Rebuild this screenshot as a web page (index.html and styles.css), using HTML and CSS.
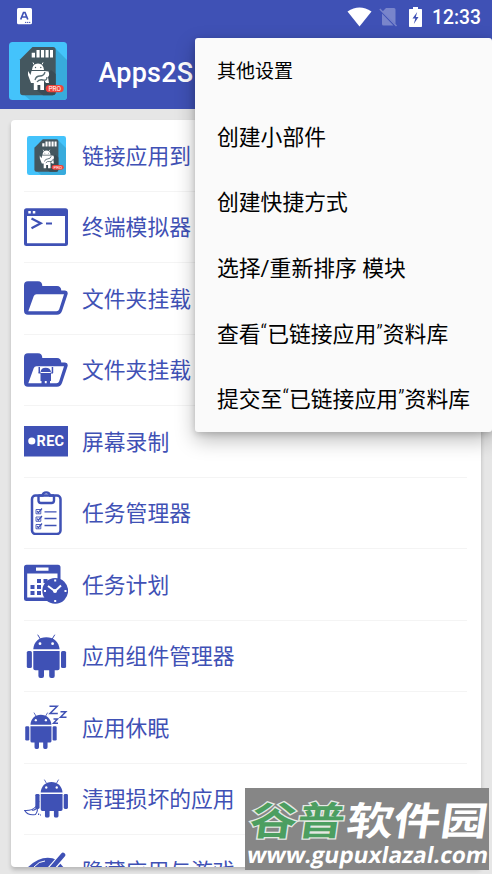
FILE: index.html
```html
<!DOCTYPE html>
<html lang="zh-CN">
<head>
<meta charset="utf-8">
<title>Apps2SD</title>
<link rel="stylesheet" href="styles.css">
</head>
<body>
<svg class="defs" width="0" height="0" aria-hidden="true">
  <symbol id="robot" viewBox="0 0 44 44">
    <path d="M13.7.7 16.3 5M30.8.7 28.2 5" fill="none" stroke="currentColor" stroke-width="1"/>
    <path d="M9.3 15.3C9.600 8 15 3.300 22.300 3.300S35 8 35.600 15.300Z"/>
    <path d="M9.300 17H35.600V34.500Q35.600 36.300 33.600 36.300H30.700V42Q30.700 44 28.800 44H27.200Q25.200 44 25.200 42V36.300H20V42Q20 44 18 44H16.400Q14.400 44 14.400 42V36.300H11.300Q9.300 36.300 9.300 34.500Z"/>
    <rect x="2.800" y="17" width="5.100" height="17" rx="1.600"/>
    <rect x="37" y="17" width="5.100" height="17" rx="1.600"/>
    <circle cx="16" cy="9.700" r="1.400" fill="#fff"/><circle cx="28.600" cy="9.700" r="1.400" fill="#fff"/>
  </symbol>
  <symbol id="folder" viewBox="0 0 44 44">
    <path fill-rule="evenodd" d="M4 5.200H14Q18.300 5.200 18.300 10H33Q37 10 37.300 14.500H41Q44.500 15 43.500 18.500L38 35Q36.800 38.700 33 38.700H4Q0 38.700 0 34.700V9.200Q0 5.200 4 5.200ZM12.500 18.200Q10.500 18.200 9.700 20.200L4.300 35.200H32.500Q34.500 35.200 35.200 33.200L40 18.200Z"/>
  </symbol>
  <symbol id="app" viewBox="0 0 58 58">
    <rect width="58" height="58" rx="3.500" fill="#44c3fb"/>
    <path d="M46 6 58 18V54Q58 58 54 58H21L14 52Z" fill="#38abdc"/>
    <path d="M23.500 5H44Q46.700 5 46.700 8V50Q46.700 53.300 43.500 53.300H14Q11 53.300 11 50V17.500Z" fill="#44575f"/>
    <path d="M42 28 46.700 32V50Q46.700 53.300 43.500 53.300H34L25 46Z" fill="#3b4c54"/>
    <path d="M22.700 10.800H26V15.500H22.700ZM27.500 8H30.600V15.500H27.500ZM32 8H35.100V15.500H32ZM36.500 8H39.600V15.500H36.500ZM41 8H44V15.500H41Z" fill="#fff"/>
    <path d="M23 28Q23.500 21.500 29 21.500T35 28ZM22.500 29H35.500L39.500 29.500Q41 33 39 35L40 41H37L35 38V48H31.300V43H28.500V48H24.800V41H22L19 33V29L21.500 33Z" fill="#fff"/>
    <path d="M25 22.500 24 20.500M33 22.500 34 20.500" stroke="#fff"/>
    <path d="M26 38Q27 34 31 34T36 30M28 40Q30 37 34 38T38 35" fill="none" stroke="#566a72" stroke-width="1.300"/>
    <circle cx="26.500" cy="25.500" r=".7" fill="#44575f"/><circle cx="31.800" cy="25.500" r=".7" fill="#44575f"/>
    <rect x="36.700" y="43" width="18" height="7.200" rx="3.600" fill="#f0443a"/>
    <text x="45.700" y="48.900" text-anchor="middle" class="pro">PRO</text>
  </symbol>
</svg>

<div class="screen">
  <header class="top">
    <div class="status">
      <svg class="notif" width="15" height="17" viewBox="0 0 15 17"><rect width="15" height="16.300" rx="1.500" fill="#fff"/><path d="M3.700 11.500 6.500 4.500H8L10.800 11.500M5 9H9.500" fill="none" stroke="#3f51b5" stroke-width="1.700"/><path d="M8 14.400H14" stroke="#3f51b5" stroke-dasharray="1.300 .7"/></svg>
      <svg class="wifi" width="25" height="20" viewBox="0 0 25 20"><path d="M.5 4.500Q12.500-3.500 24.500 4.500L12.500 19.500Z" fill="#fff"/></svg>
      <svg class="sim" width="19" height="20" viewBox="0 0 19 20"><path d="M7 1H15Q16.500 1 16.500 2.500V17L3.500 4.500ZM3 6.500 14.500 18.500H4.500Q3 18.500 3 17Z" fill="#7985cb"/><path d="M.8 2 17.500 19" stroke="#7985cb" stroke-width="1.400"/></svg>
      <svg class="battery" width="13" height="20" viewBox="0 0 13 20"><path d="M4 0H9V2H12.300Q13 2 13 2.800V19.200Q13 20 12.300 20H.7Q0 20 0 19.200V2.800Q0 2 .7 2H4Z" fill="#fff"/><path d="M8.200 5 3.500 11.500H6.300L4.800 17 9.500 10H6.800Z" fill="#3f51b5"/></svg>
      <span class="clock">12:33</span>
    </div>
    <div class="bar">
      <svg class="logo" width="58" height="58"><use href="#app"/></svg>
      <h1 class="title">Apps2S</h1>
    </div>
  </header>

  <main class="card">
    <div class="row"><div class="icon"><svg width="39" height="39"><use href="#app"/></svg></div><span>链接应用到</span></div>
    <div class="row"><div class="icon"><svg width="44" height="44" viewBox="0 0 44 44"><path fill-rule="evenodd" d="M2.500 3.300H41.500Q44 3.300 44 5.800V38.500Q44 41 41.500 41H2.500Q0 41 0 38.500V5.800Q0 3.300 2.500 3.300ZM3 11V38.200H41V11Z"/><path d="M4.300 6H6.800V8.500H4.300ZM8.800 6H11.300V8.500H8.800Z" fill="#fff"/><path d="M7.500 13.500 16.800 18.300 7.500 23.200M22 18.500H28" fill="none" stroke="currentColor" stroke-width="2.200"/></svg></div><span>终端模拟器</span></div>
    <div class="row"><div class="icon"><svg width="44" height="44"><use href="#folder"/></svg></div><span>文件夹挂载</span></div>
    <div class="row"><div class="icon"><svg width="44" height="44" viewBox="0 0 44 44"><use href="#folder"/><path d="M16.500 24Q17 19.700 21.700 19.700T27 24ZM16.500 25H27V33H26V36H22.700V33H20.800V36H17.500V33H16.500ZM14.500 19H16V25H14.500ZM27.700 19H29.200V25H27.700Z"/><path d="M14.500 25H17M26.500 25H29" stroke="currentColor"/></svg></div><span>文件夹挂载</span></div>
    <div class="row"><div class="icon"><svg width="44" height="44" viewBox="0 0 44 44"><rect y="7" width="44" height="30.500"/><circle cx="7.800" cy="22" r="3.600" fill="#fff"/><text x="12.600" y="26.900" textLength="27.500" class="rec">REC</text></svg></div><span>屏幕录制</span></div>
    <div class="row"><div class="icon"><svg width="44" height="44" viewBox="0 0 44 44" fill="none" stroke="currentColor"><rect x="8" y="4.500" width="28.500" height="38.500" rx="3.500" stroke-width="2.500"/><path d="M14.500 4V9.500Q14.500 12 17 12H27.500Q30 12 30 9.500V4" stroke-width="2.400"/><path d="M14.500 4.500H18.500Q19 1.300 22.200 1.300T26 4.500H30" stroke-width="2.300"/><path d="M20.500 20.800H32.500M20.500 27.500H32.500M20.500 34.500H32.500" stroke-width="1.300"/><path d="M12 18.500H16.800V22.800H12ZM12 26H16.800V30.300H12ZM12 33.500H16.800V37.800H12Z" stroke-width=".9"/><path d="M13 20 14.300 21.700 18 17.500M13 27.500 14.300 29.200 18 25M13 35 14.300 36.700 18 32.500" stroke-width="1.200"/></svg></div><span>任务管理器</span></div>
    <div class="row"><div class="icon"><svg width="44" height="44" viewBox="0 0 44 44"><path fill-rule="evenodd" d="M2.500 2.800H34Q36.500 2.800 36.500 5.300V39H2.500Q0 39 0 36.500V5.300Q0 2.800 2.500 2.800ZM3.200 11.500V35.500H33.500V11.500ZM12 5.500V8.700H24.500V5.500Z"/><path d="M13 17H17V21H13ZM19.500 17H23.500V21H19.500ZM6.500 23H10.500V27H6.500ZM13 23H17V27H13ZM6.500 29H10.500V33H6.500ZM13 29H17V33H13Z"/><circle cx="31.200" cy="28.800" r="12.900"/><path d="M24 24 31 29.300 37 23.500" fill="none" stroke="#fff" stroke-width="2"/><circle cx="31" cy="29" r="2" fill="#fff"/><path d="M30.200 17.500H32.200V19.500H30.200ZM30.200 38H32.200V40H30.200ZM20 28H22V30H20ZM40.500 28H42.500V30H40.500Z" fill="#fff"/></svg></div><span>任务计划</span></div>
    <div class="row"><div class="icon"><svg width="44" height="44"><use href="#robot"/></svg></div><span>应用组件管理器</span></div>
    <div class="row"><div class="icon"><svg width="44" height="44" viewBox="0 0 44 44"><g transform="translate(-1 7) scale(.8 .84)"><use href="#robot" width="44" height="44"/></g><path d="M25.500 1.200H33.200L26 8.500H33.800M36.500 6.800H41.800L36.500 12.200H42.500M29.500 14H33.500L29.500 18.300H34" fill="none" stroke="currentColor" stroke-width="1.500"/></svg></div><span>应用休眠</span></div>
    <div class="row"><div class="icon"><svg width="44" height="44" viewBox="0 0 44 44"><g transform="translate(9 2) scale(.83 .88)"><use href="#robot" width="44" height="44"/></g><path d="M15 24 12.500 30M.7 33.500Q8 34 12 29.500Q15 33 11.500 37.500Q4 39 .7 33.500ZM8 33Q10 34 13 31" fill="none" stroke="currentColor" stroke-width="1.100"/><path d="M14 36.500H15.200V38H14ZM16 37.500H17V38.500H16Z"/></svg></div><span>清理损坏的应用</span></div>
    <div class="row"><div class="icon"><svg width="44" height="44" viewBox="0 0 44 44"><path d="M2 21Q18 5 33 12L42 22 22 34Z"/><path d="M19 30 42 4" stroke="#fff" stroke-width="7"/><path d="M14 36 39 7" stroke="currentColor" stroke-width="4.600" stroke-linecap="round"/><path d="M10 19Q15 13 21 13" fill="none" stroke="#fff"/></svg></div><span>隐藏应用与游戏</span></div>
  </main>

  <nav class="menu">
    <div class="item head">其他设置</div>
    <div class="item">创建小部件</div>
    <div class="item">创建快捷方式</div>
    <div class="item">选择/重新排序 模块</div>
    <div class="item">查看<span class="quote">“</span>已链接应用<span class="quote">”</span>资料库</div>
    <div class="item">提交至<span class="quote">“</span>已链接应用<span class="quote">”</span>资料库</div>
  </nav>

  <svg class="mark" width="244" height="82" viewBox="0 0 244 82">
    <rect width="244" height="82" fill="#868686"/>
    <text transform="translate(3 46.500) skewX(-8)" textLength="95" lengthAdjust="spacingAndGlyphs" class="brand green">谷普</text>
    <text transform="translate(100 46.500) skewX(-8)" textLength="141" lengthAdjust="spacingAndGlyphs" class="brand">软件园</text>
    <text transform="translate(1 74.500) skewX(-10)" textLength="241" lengthAdjust="spacingAndGlyphs" class="url">www.gupuxlazal.com</text>
  </svg>
</div>
</body>
</html>
```

FILE: styles.css
```css
* { box-sizing: border-box; }
body {
  margin: 0;
  background: #e6e6e6;
  font-family: Roboto, "Noto Sans CJK SC", sans-serif;
}
.defs { position: absolute; }
.screen {
  position: relative;
  width: 492px;
  height: 874px;
  overflow: hidden;
}
.top {
  height: 109px;
  background: #3f51b5;
  color: #fff;
}
.status {
  display: flex;
  align-items: center;
  height: 33px;
  padding: 0 11px 0 17px;
}
.wifi { margin-left: auto; }
.sim { margin-left: 7px; }
.battery { margin-left: 11px; }
.clock {
  margin: 2px 0 0 10px;
  font-size: 19.3px;
  font-weight: 500;
  line-height: 33px;
}
.bar {
  display: flex;
  align-items: center;
  height: 76px;
  padding-left: 9px;
}
.title {
  margin: 3px 0 0 31.500px;
  font-size: 27px;
  font-weight: 500;
  line-height: 32px;
  letter-spacing: .2px;
}
.card {
  width: 470px;
  height: 747px;
  margin: 11px 0 0 11px;
  overflow: hidden;
  background: #fff;
  border-radius: 4px;
  box-shadow: 0 3px 4px rgba(0, 0, 0, .2);
}
.row {
  display: flex;
  align-items: center;
  height: 71.500px;
  margin: 0 14px 0 13px;
  border-bottom: 1px solid #f4f4f4;
  color: #3f51b5;
  font-size: 21.8px;
  font-weight: 400;
  white-space: nowrap;
}
.row span { padding-bottom: 2px; }
.icon {
  display: flex;
  flex: none;
  justify-content: center;
  width: 44px;
  margin-right: 14px;
}
.icon svg { fill: currentColor; }
.icon svg[fill="none"] { fill: none; }
.pro {
  fill: #fff;
  font: 6.500px Roboto, sans-serif;
}
.rec {
  fill: #fff;
  font: 700 14.500px Roboto, sans-serif;
}
.menu {
  position: absolute;
  top: 38px;
  left: 195px;
  width: 297px;
  height: 394px;
  background: #fafafa;
  border-radius: 3px;
  box-shadow: 0 8px 20px rgba(0, 0, 0, .27), 0 2px 6px rgba(0, 0, 0, .16);
}
.item {
  display: flex;
  align-items: center;
  height: 65.600px;
  padding: 0 0 2px 22px;
  color: #000;
  font-size: 21.8px;
  font-weight: 400;
  white-space: pre;
}
.quote {
  width: 6.600px;
  font-weight: 300;
}
.head { font-size: 19px; }
.mark {
  position: absolute;
  top: 787.500px;
  left: 244.500px;
}
.brand {
  fill: #fff;
  font: 700 39px "Noto Sans CJK SC", sans-serif;
}
.green {
  fill: #4c9e60;
  stroke: #e4e9e4;
  stroke-width: 2.500px;
  paint-order: stroke;
}
.url {
  fill: #fff;
  font: 700 22.500px "Open Sans", sans-serif;
}
```
